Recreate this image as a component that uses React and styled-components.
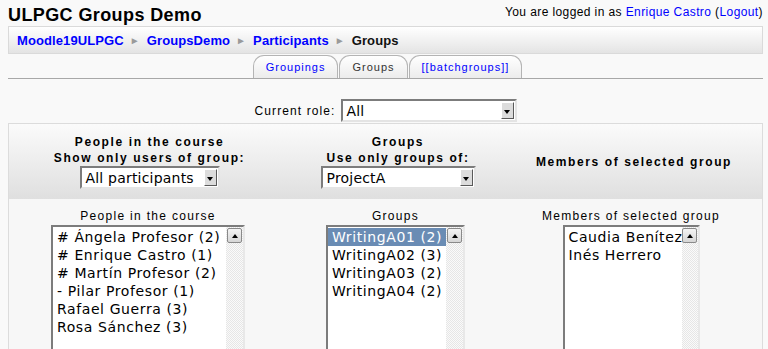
import React from "react"
import styled, { createGlobalStyle } from "styled-components"

const GlobalStyle = createGlobalStyle`
  body {
    margin: 0;
    background: #f9f9f9;
    font-family: "Liberation Sans", Arial, sans-serif;
    color: #000;
  }
`

const Page = styled.div`
  padding: 5px 5px 0 8px;
`

const TopBar = styled.div`
  display: flex;
  justify-content: space-between;
  align-items: flex-start;
`

const Title = styled.h1`
  margin: 0;
  font-size: 18px;
  line-height: 20px;
  font-weight: bold;
  letter-spacing: 0.4px;
`

const Login = styled.div`
  font-size: 12px;
  line-height: 14px;
  letter-spacing: 0.4px;
`

const Link = styled.a`
  color: #0000ff;
  text-decoration: none;
`

const Navbar = styled.div`
  margin-top: 1px;
  height: 16px;
  padding: 6px 8px 4px;
  border: 1px solid #dadada;
  background: linear-gradient(#ffffff, #e4e4e4);
  font-size: 13px;
  line-height: 16px;
  font-weight: bold;
  letter-spacing: 0.1px;
  display: flex;
  align-items: center;
`

const Sep = styled.span`
  color: #9a9a9a;
  font-size: 10px;
  margin: 0 7px 0 6px;
`

const Current = styled.span`
  color: #111;
`

const TabRow = styled.div`
  margin-top: 1px;
  padding-left: 4px;
  display: flex;
  justify-content: center;
  gap: 1px;
  border-bottom: 1px solid #a8a8a8;
`

const Tab = styled.div`
  height: 22px;
  padding: 0 12px;
  border: 1px solid #b4b4b4;
  border-bottom: none;
  border-radius: 11px 11px 0 0;
  background: linear-gradient(#ffffff, #ececec);
  font-size: 11px;
  line-height: 22px;
  letter-spacing: 1px;
  color: ${(p) => (p.$active ? "#333" : "#0000ff")};
`

const RoleRow = styled.div`
  margin-top: 20px;
  display: flex;
  justify-content: center;
  align-items: center;
  gap: 5px;
  font-size: 12px;
  letter-spacing: 1.1px;
`

const SelectBox = styled.div`
  box-sizing: border-box;
  display: flex;
  align-items: center;
  width: ${(p) => p.$width}px;
  height: 23px;
  padding: 0 1px 0 4px;
  border: 2px solid;
  border-color: #7c7c7c #e4e4e4 #e4e4e4 #7c7c7c;
  background: #fff;
  font-family: "DejaVu Sans", sans-serif;
  font-size: 14px;
  font-weight: normal;
  letter-spacing: 0.2px;
  color: #000;
`

const SelectText = styled.span`
  flex: 1;
  text-align: left;
  white-space: nowrap;
`

const DropButton = styled.span`
  box-sizing: border-box;
  width: 13px;
  height: 17px;
  display: flex;
  align-items: center;
  justify-content: center;
  border: 1px solid;
  border-color: #fff #5a5a5a #5a5a5a #fff;
  background: #dcdcdc;

  &::after {
    content: "";
    border-left: 3.5px solid transparent;
    border-right: 3.5px solid transparent;
    border-top: 4px solid #000;
    margin-top: 2px;
  }
`

const Panel = styled.div`
  margin-top: 1px;
  border: 1px solid #dcdcdc;
  background: #f7f7f7;
`

const HeadRow = styled.div`
  display: grid;
  grid-template-columns: 281px 216px 1fr;
  align-items: center;
  height: 75px;
  background: linear-gradient(#fbfbfb, #dfdfdf);
`

const HeadCell = styled.div`
  display: flex;
  flex-direction: column;
  align-items: center;
  font-size: 12px;
  line-height: 16px;
  font-weight: bold;
  letter-spacing: 1.6px;
`

const ListRow = styled.div`
  display: grid;
  grid-template-columns: 278px 217px 1fr;
  padding: 9px 4px 0 0;
  height: 150px;
`

const ListCell = styled.div`
  display: flex;
  flex-direction: column;
  align-items: center;
  gap: 1px;
`

const ListLabel = styled.div`
  font-size: 12px;
  line-height: 16px;
  letter-spacing: 1.3px;
`

const ListBox = styled.div`
  box-sizing: border-box;
  display: flex;
  width: ${(p) => p.$width}px;
  height: 150px;
  border: 2px solid;
  border-color: #7c7c7c #e8e8e8 #e8e8e8 #7c7c7c;
  background: #fff;
`

const Options = styled.div`
  flex: 1;
  padding-top: 1px;
  font-family: "DejaVu Sans", sans-serif;
  font-size: 14px;
  line-height: 18px;
  letter-spacing: 0.6px;
`

const Option = styled.div`
  padding-left: 4px;
  white-space: nowrap;
  background: ${(p) => (p.$selected ? "#6a8cb4" : "transparent")};
  color: ${(p) => (p.$selected ? "#fff" : "#000")};
`

const Scrollbar = styled.div`
  width: 17px;
  display: flex;
  justify-content: center;
  padding-top: 1px;
  background-color: #f8f8f8;
  background-image: conic-gradient(#e6e6e6 25%, #fafafa 0 50%, #e6e6e6 0 75%, #fafafa 0);
  background-size: 2px 2px;
`

const ScrollButton = styled.span`
  box-sizing: border-box;
  width: 15px;
  height: 15px;
  display: flex;
  align-items: center;
  justify-content: center;
  border: 1px solid #8a8a8a;
  border-radius: 2px;
  background: linear-gradient(#f4f4f4, #d6d6d6);

  &::after {
    content: "";
    border-left: 3.5px solid transparent;
    border-right: 3.5px solid transparent;
    border-bottom: 4px solid #000;
  }
`

const people = [
  "# Ángela Profesor (2)",
  "# Enrique Castro (1)",
  "# Martín Profesor (2)",
  "- Pilar Profesor (1)",
  "Rafael Guerra (3)",
  "Rosa Sánchez (3)",
]

const groups = ["WritingA01 (2)", "WritingA02 (3)", "WritingA03 (2)", "WritingA04 (2)"]

const members = ["Caudia Benítez", "Inés Herrero"]

function Select({ width, value }) {
  return (
    <SelectBox $width={width}>
      <SelectText>{value}</SelectText>
      <DropButton />
    </SelectBox>
  )
}

function List({ label, width, items, selected }) {
  return (
    <ListCell>
      <ListLabel>{label}</ListLabel>
      <ListBox $width={width}>
        <Options>
          {items.map((item, i) => (
            <Option key={item} $selected={i === selected}>
              {item}
            </Option>
          ))}
        </Options>
        <Scrollbar>
          <ScrollButton />
        </Scrollbar>
      </ListBox>
    </ListCell>
  )
}

export default function App() {
  return (
    <Page>
      <GlobalStyle />
      <TopBar>
        <Title>ULPGC Groups Demo</Title>
        <Login>
          You are logged in as <Link href="#">Enrique Castro</Link> (<Link href="#">Logout</Link>)
        </Login>
      </TopBar>
      <Navbar>
        <Link href="#">Moodle19ULPGC</Link>
        <Sep>►</Sep>
        <Link href="#">GroupsDemo</Link>
        <Sep>►</Sep>
        <Link href="#">Participants</Link>
        <Sep>►</Sep>
        <Current>Groups</Current>
      </Navbar>
      <TabRow>
        <Tab>Groupings</Tab>
        <Tab $active>Groups</Tab>
        <Tab>[[batchgroups]]</Tab>
      </TabRow>
      <RoleRow>
        <span>Current role:</span>
        <Select width={176} value="All" />
      </RoleRow>
      <Panel>
        <HeadRow>
          <HeadCell>
            <span>People in the course</span>
            <span>Show only users of group:</span>
            <Select width={140} value="All participants" />
          </HeadCell>
          <HeadCell>
            <span>Groups</span>
            <span>Use only groups of:</span>
            <Select width={155} value="ProjectA" />
          </HeadCell>
          <HeadCell>
            <span>Members of selected group</span>
          </HeadCell>
        </HeadRow>
        <ListRow>
          <List label="People in the course" width={194} items={people} />
          <List label="Groups" width={139} items={groups} selected={0} />
          <List label="Members of selected group" width={137} items={members} />
        </ListRow>
      </Panel>
    </Page>
  )
}
